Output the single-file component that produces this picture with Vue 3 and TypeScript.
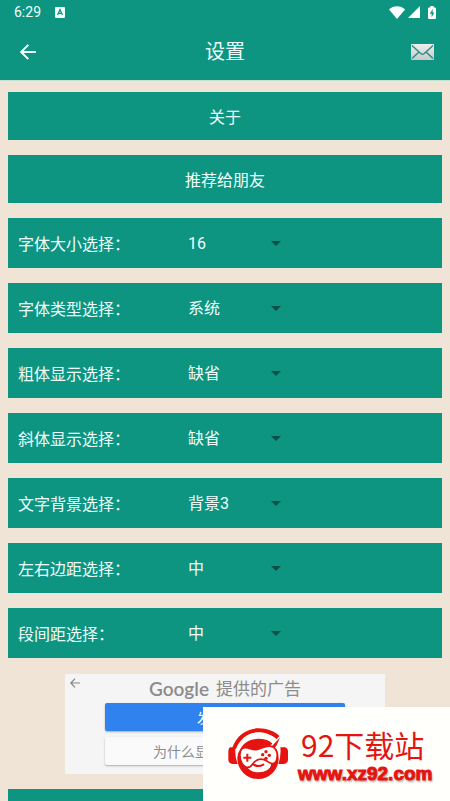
<script setup lang="ts">
import { ref } from 'vue'

interface Setting {
  id: string
  label: string
  value: string
}

const actions = ['关于', '推荐给朋友']

const settings = ref<Setting[]>([
  { id: 'font-size', label: '字体大小选择：', value: '16' },
  { id: 'font-type', label: '字体类型选择：', value: '系统' },
  { id: 'bold', label: '粗体显示选择：', value: '缺省' },
  { id: 'italic', label: '斜体显示选择：', value: '缺省' },
  { id: 'background', label: '文字背景选择：', value: '背景3' },
  { id: 'margin', label: '左右边距选择：', value: '中' },
  { id: 'paragraph', label: '段间距选择：', value: '中' },
])
</script>

<template>
  <div class="page" lang="zh-CN">
    <header class="top">
      <div class="status">
        <span class="time">6:29</span>
        <svg class="app-badge" viewBox="0 0 10 11" aria-hidden="true">
          <rect width="10" height="11" rx="1" fill="#f2fffc" />
          <path d="M2.6 8 5 2.6 7.4 8M3.5 6.4h3" fill="none" stroke="#0d9582" stroke-width="1.3" />
        </svg>
        <span class="spacer"></span>
        <svg class="wifi" viewBox="0 0 16 13" aria-hidden="true">
          <path d="M0 3.6C4.6-.8 11.4-.8 16 3.6L8 13Z" fill="#fff" />
        </svg>
        <svg class="signal" viewBox="0 0 12 12" aria-hidden="true">
          <path d="M12 0v12H0Z" fill="#fff" />
        </svg>
        <svg class="battery" viewBox="0 0 8 13" aria-hidden="true">
          <path d="M2.3 0h3.4v1.4H7a1 1 0 0 1 1 1V12a1 1 0 0 1-1 1H1a1 1 0 0 1-1-1V2.4a1 1 0 0 1 1-1h1.3Z" fill="#fff" />
          <path d="M4.7 3 1.8 7.7h1.8V11.5L6.3 6.6H4.7Z" fill="#0d9582" />
        </svg>
      </div>
      <div class="bar">
        <button class="icon-button" type="button" aria-label="返回">
          <svg class="back" viewBox="0 0 16 16" aria-hidden="true">
            <path d="M16 8H1.5M8.3.9 1.2 8l7.1 7.1" fill="none" stroke="#effffc" stroke-width="2" />
          </svg>
        </button>
        <h1>设置</h1>
        <button class="icon-button" type="button" aria-label="邮件">
          <svg class="mail" viewBox="0 0 23 16" aria-hidden="true">
            <defs>
              <linearGradient id="mail-fill" x1="0" y1="0" x2="0" y2="1">
                <stop offset="0" stop-color="#eeeeee" />
                <stop offset="1" stop-color="#c6cacb" />
              </linearGradient>
            </defs>
            <rect width="23" height="16" rx="1" fill="url(#mail-fill)" />
            <path d="M1 1.5 9.7 9.5Q11.5 11 13.3 9.5L22 1.5M1 14.5 8 8M22 14.5 15 8" fill="none" stroke="#2e8e80" stroke-width="1.5" />
          </svg>
        </button>
      </div>
    </header>

    <main class="content">
      <button v-for="action in actions" :key="action" class="action" type="button">{{ action }}</button>

      <div v-for="item in settings" :key="item.id" class="setting">
        <label :for="item.id">{{ item.label }}</label>
        <div class="picker">
          <select :id="item.id" v-model="item.value">
            <option :value="item.value">{{ item.value }}</option>
          </select>
          <svg class="caret" viewBox="0 0 10 5" aria-hidden="true">
            <path d="M0 0h10L5 5Z" fill="#0b4f48" />
          </svg>
        </div>
      </div>

      <section class="ad">
        <button class="ad-back" type="button" aria-label="返回广告">
          <svg viewBox="0 0 10 10" aria-hidden="true">
            <path d="M10 5H1M5 .6.8 5 5 9.4" fill="none" stroke="#858585" stroke-width="1.2" />
          </svg>
        </button>
        <div class="ad-title"><span class="brand">Google</span><span>提供的广告</span></div>
        <button class="ad-button primary" type="button">发送反馈</button>
        <button class="ad-button" type="button">
          为什么显示此广告？
          <svg class="info" viewBox="0 0 14 14" aria-hidden="true">
            <path d="M2 1.5 12 7 2 12.5Z" fill="none" stroke="#4a9de0" />
          </svg>
        </button>
      </section>

      <div class="action"></div>
    </main>

    <aside class="site-mark">
      <svg class="mascot" viewBox="0 0 180 156" aria-hidden="true">
        <path d="M12 62C24 24 55 1 91 1c27 0 49 9 66 25l-9 9C132 21 113 13 91 13 61 13 37 31 24 62Z" fill="#e51410" />
        <path d="M6 58h17q-4 26 6 50H13Q1 105 1 95V69Q1 61 6 58ZM157 58h15q8 3 8 11v26q0 10-12 13h-17q9-25 6-50Z" fill="#e51410" />
        <circle cx="90" cy="91" r="62" fill="#e51410" />
        <path d="M30 73C40 44 63 30 91 30c18 0 32 4 44 13" fill="none" stroke="#fffffc" stroke-width="5" />
        <path d="M118 66 163 18l-15 34-13 18Z" fill="#e51410" stroke="#fffffc" stroke-width="4" />
        <ellipse cx="92" cy="108" rx="37" ry="25" fill="#fffffc" />
        <path d="M42 62c14-9 28 5 43 3 19-3 31-18 50-8 17 10 15 38 5 48-10 8-19-6-32-10-17-5-26 2-34 13-9 15-25 12-33-4-7-15-8-34 1-42Z" fill="#fffffc" stroke="#e51410" stroke-width="5" />
        <path d="M58 77v24M46 89h24" stroke="#e51410" stroke-width="6" />
        <g fill="#e51410">
          <circle cx="114" cy="71" r="5" />
          <circle cx="104" cy="80" r="5" />
          <circle cx="124" cy="82" r="5" />
          <circle cx="114" cy="91" r="5" />
        </g>
        <path d="M76 109q14 10 30 1" fill="none" stroke="#e51410" stroke-width="6" stroke-linecap="round" />
      </svg>
      <div class="site-text">
        <span class="site-name">92下载站</span>
        <span class="site-url">www.xz92.com</span>
      </div>
    </aside>
  </div>
</template>

<style>
body {
  margin: 0;
}
</style>

<style scoped>
.page {
  position: relative;
  height: 100vh;
  overflow: hidden;
  background: #f0e4d7;
  color: #effffc;
  font-family: Roboto, "Noto Sans CJK SC", sans-serif;
  font-size: 16px;
}

button,
select {
  border: 0;
  padding: 0;
  margin: 0;
  background: none;
  color: inherit;
  font: inherit;
}

svg {
  display: block;
}

.top {
  background: #0d9582;
  border-bottom: 1px solid #c5dfd0;
}

.status {
  display: flex;
  align-items: center;
  height: 24px;
  padding: 0 14px;
}

.time {
  font-size: 14px;
  line-height: 24px;
}

.app-badge {
  width: 10px;
  height: 11px;
  margin-left: 14px;
}

.spacer {
  flex: 1;
}

.wifi {
  width: 16px;
  height: 13px;
  margin-right: 3px;
}

.signal {
  width: 12px;
  height: 12px;
  margin-right: 8px;
}

.battery {
  width: 8px;
  height: 13px;
}

.bar {
  display: flex;
  align-items: center;
  justify-content: space-between;
  height: 56px;
  padding: 0 8px;
}

.icon-button {
  display: grid;
  place-items: center;
  width: 40px;
  height: 40px;
}

.back {
  width: 16px;
  height: 16px;
}

.mail {
  width: 23px;
  height: 16px;
}

h1 {
  margin: 0;
  font-size: 20px;
  line-height: 24px;
  font-weight: 400;
}

.content {
  display: flex;
  flex-direction: column;
  gap: 15px;
  padding: 11px 8px;
}

.action {
  min-height: 48px;
  background: #0d9582;
  text-align: center;
}

.setting {
  display: grid;
  grid-template-columns: 170px 1fr;
  align-items: center;
  min-height: 50px;
  padding-left: 10px;
  background: #0d9582;
}

label {
  font-family: "Noto Sans CJK SC", sans-serif;
  line-height: 24px;
}

.picker {
  position: relative;
  width: 96px;
}

select {
  display: block;
  width: 100%;
  height: 32px;
  appearance: none;
}

.caret {
  position: absolute;
  right: 3px;
  top: 14px;
  width: 10px;
  height: 5px;
  pointer-events: none;
}

.ad {
  position: relative;
  display: flex;
  flex-direction: column;
  align-items: center;
  box-sizing: border-box;
  width: 320px;
  min-height: 100px;
  margin-top: 1px;
  align-self: center;
  background: #f5f5f5;
  color: #8c8c8c;
}

.ad-back {
  position: absolute;
  left: 5px;
  top: 4px;
}

.ad-back svg {
  width: 10px;
  height: 10px;
}

.ad-title {
  display: flex;
  align-items: center;
  gap: 7px;
  height: 29px;
  font-size: 17px;
  line-height: 24px;
}

.brand {
  font-family: Lato, sans-serif;
  font-size: 19px;
  font-weight: 600;
}

.ad-button {
  display: flex;
  align-items: center;
  justify-content: center;
  gap: 4px;
  width: 240px;
  height: 28px;
  margin-bottom: 6px;
  border-radius: 2px;
  background: #fafafa;
  box-shadow: 0 1px 2px #0000004d;
  font-size: 14px;
}

.primary {
  background: #3083ef;
  color: #fff;
}

.info {
  width: 14px;
  height: 14px;
}

.site-mark {
  position: absolute;
  right: 0;
  bottom: 0;
  display: flex;
  align-items: center;
  gap: 10px;
  box-sizing: border-box;
  width: 247px;
  height: 94px;
  padding-left: 25px;
  background: #fffffc;
  color: #e51410;
}

.mascot {
  width: 60px;
  height: 52px;
}

.site-text {
  display: flex;
  flex-direction: column;
}

.site-name {
  padding-left: 3px;
  font-family: "Noto Sans CJK SC", sans-serif;
  font-size: 30px;
  line-height: 40px;
}

.site-url {
  font-family: "Liberation Sans", sans-serif;
  font-size: 19px;
  line-height: 20px;
  font-weight: 700;
  -webkit-text-stroke: 1px #e51410;
  text-shadow: 1px 2px 2px #00000059;
}
</style>
